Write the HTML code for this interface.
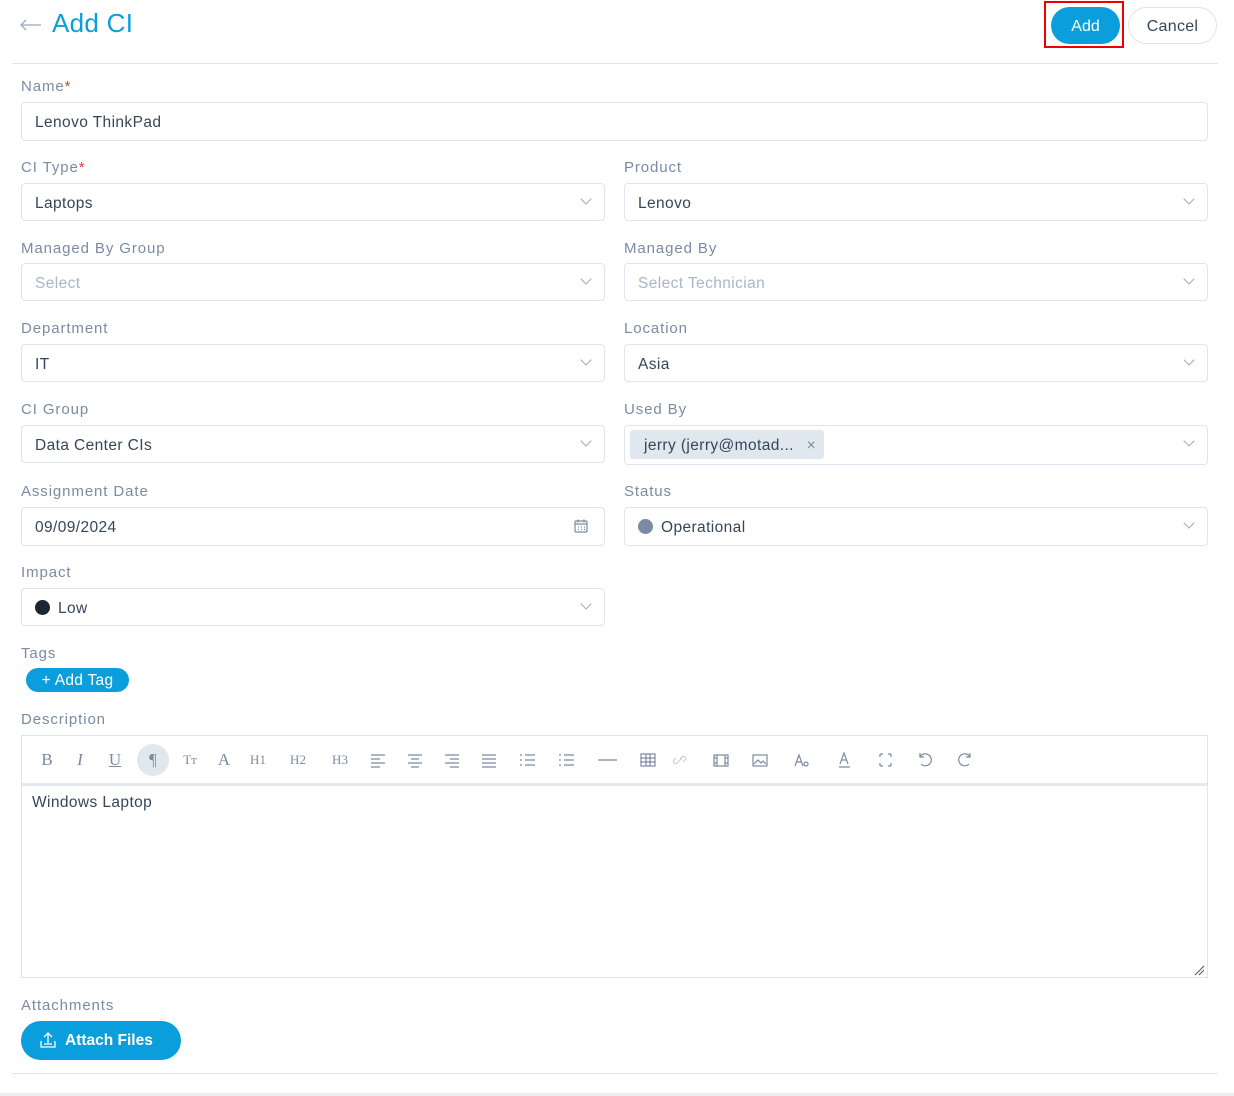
<!DOCTYPE html>
<html><head><meta charset="utf-8"><style>
*{box-sizing:border-box;margin:0;padding:0}
body{width:1234px;height:1096px;background:#fff;font-family:"Liberation Sans",sans-serif;position:relative;overflow:hidden;color:#364658}
.a{position:absolute}
.lbl{position:absolute;font-size:15px;color:#7b8ba3;letter-spacing:0.9px;margin-top:2px}
.req{color:#e53935}
.inp{position:absolute;height:38px;border:1px solid #dfe5ee;border-radius:4px;font-size:15.5px;letter-spacing:0.4px;color:#364658;padding-left:13px;line-height:39px;background:#fff}
.chev{position:absolute;right:14px;top:11px;width:8px;height:8px;border-right:1px solid #9aa8ba;border-bottom:1px solid #9aa8ba;transform:rotate(45deg)}
.tb{position:absolute;top:750px;font-family:"Liberation Serif",serif;color:#7b8ba3;font-size:17px;transform:translateX(-50%);line-height:20px}
</style></head><body>
<svg class="a" style="left:20px;top:19px" width="22" height="12" fill="none" stroke="#9aa8ba" stroke-width="1.3"><path d="M21 6H1M6 1L1 6l5 5"/></svg>
<div class="a" style="left:52px;top:8px;font-size:26px;color:#0a9fdc;letter-spacing:0.3px">Add CI</div>
<div class="a" style="left:1044px;top:1px;width:80px;height:47px;border:2px solid #e00"></div>
<div class="a" style="left:1051px;top:7px;width:69px;height:37px;border-radius:19px;background:#0a9fdc;color:#fff;font-size:16px;text-align:center;line-height:39px">Add</div>
<div class="a" style="left:1128px;top:7px;width:89px;height:37px;border-radius:19px;border:1px solid #dfe5ee;color:#364658;font-size:16px;text-align:center;line-height:37px;letter-spacing:0.3px">Cancel</div>
<div class="a" style="left:12px;top:63px;width:1206px;height:1px;background:#dfe5ee"></div>

<div class="lbl" style="left:21px;top:76px">Name<span class="req">*</span></div>
<div class="inp" style="left:21px;top:102px;width:1187px;height:39px">Lenovo ThinkPad</div>

<div class="lbl" style="left:21px;top:157px">CI Type<span class="req">*</span></div>
<div class="inp" style="left:21px;top:183px;width:584px">Laptops<i class="chev"></i></div>
<div class="lbl" style="left:624px;top:157px">Product</div>
<div class="inp" style="left:624px;top:183px;width:584px">Lenovo<i class="chev"></i></div>

<div class="lbl" style="left:21px;top:238px">Managed By Group</div>
<div class="inp" style="left:21px;top:263px;width:584px;color:#aab6c7">Select<i class="chev"></i></div>
<div class="lbl" style="left:624px;top:238px">Managed By</div>
<div class="inp" style="left:624px;top:263px;width:584px;color:#aab6c7">Select Technician<i class="chev"></i></div>

<div class="lbl" style="left:21px;top:318px">Department</div>
<div class="inp" style="left:21px;top:344px;width:584px">IT<i class="chev"></i></div>
<div class="lbl" style="left:624px;top:318px">Location</div>
<div class="inp" style="left:624px;top:344px;width:584px">Asia<i class="chev"></i></div>

<div class="lbl" style="left:21px;top:399px">CI Group</div>
<div class="inp" style="left:21px;top:425px;width:584px">Data Center CIs<i class="chev"></i></div>
<div class="lbl" style="left:624px;top:399px">Used By</div>
<div class="inp" style="left:624px;top:425px;width:584px;height:40px;padding-left:5px;line-height:29px">
<span style="display:inline-block;background:#e1e7ef;border-radius:3px;height:29px;line-height:31px;margin-top:4px;padding:0 8px 0 14px;vertical-align:top">jerry (jerry@motad... <span style="color:#7b8ba3;margin-left:8px">&#215;</span></span><i class="chev"></i></div>

<div class="lbl" style="left:21px;top:481px">Assignment Date</div>
<div class="inp" style="left:21px;top:507px;width:584px;height:39px">09/09/2024
<svg class="a" style="right:16px;top:11px" width="14" height="14" viewBox="0 0 14 14" fill="none" stroke="#7b8ba3" stroke-width="1.2"><rect x="1" y="2" width="12" height="11" rx="1"/><path d="M1 5h12M4 0.5v3M10 0.5v3"/><path d="M4 8h1M7 8h1M10 8h1M4 10.5h1M7 10.5h1M10 10.5h1"/></svg></div>
<div class="lbl" style="left:624px;top:481px">Status</div>
<div class="inp" style="left:624px;top:507px;width:584px;height:39px"><span style="display:inline-block;width:15px;height:15px;border-radius:50%;background:#7b8ba3;vertical-align:-2px;margin-right:8px"></span>Operational<i class="chev"></i></div>

<div class="lbl" style="left:21px;top:562px">Impact</div>
<div class="inp" style="left:21px;top:588px;width:584px"><span style="display:inline-block;width:15px;height:15px;border-radius:50%;background:#1b2533;vertical-align:-2px;margin-right:8px"></span>Low<i class="chev"></i></div>

<div class="lbl" style="left:21px;top:643px">Tags</div>
<div class="a" style="left:26px;top:668px;width:103px;height:24px;border-radius:12px;background:#0a9fdc;color:#fff;font-size:15.5px;line-height:25px;text-align:center;letter-spacing:0.3px">+ Add Tag</div>

<div class="lbl" style="left:21px;top:709px">Description</div>
<div class="a" style="left:21px;top:735px;width:1187px;height:243px;border:1px solid #dfe5ee"></div>
<div class="a" style="left:22px;top:783px;width:1185px;height:3px;background:#e6e9ee"></div>
<div class="a" style="left:137px;top:744px;width:32px;height:32px;border-radius:50%;background:#e1e7ef"></div>
<div class="tb" style="left:47px">B</div>
<div class="tb" style="left:80px;font-style:italic">I</div>
<div class="tb" style="left:115px;text-decoration:underline">U</div>
<div class="tb" style="left:153px">¶</div>
<div class="tb" style="left:190px;font-size:13px">Tт</div>
<div class="tb" style="left:224px">A</div>
<div class="tb" style="left:258px;font-size:13px">H1</div>
<div class="tb" style="left:298px;font-size:13px">H2</div>
<div class="tb" style="left:340px;font-size:13px">H3</div>
<svg class="a" style="left:370px;top:752px" width="610" height="18" fill="none" stroke="#7b8ba3" stroke-width="1.2">
<path d="M1 3h14M1 7h9M1 11h14M1 15h9"/>
<path d="M38 3h14M41 7h8M38 11h14M41 15h8"/>
<path d="M75 3h14M80 7h9M75 11h14M80 15h9"/>
<path d="M112 3h14M112 7h14M112 11h14M112 15h14"/>
<path d="M150 3h2M155 3h10M150 8h2M155 8h10M150 13h2M155 13h10"/>
<path d="M189 3h2M194 3h10M189 8h2M194 8h10M189 13h2M194 13h10"/>
<path d="M228 8h19"/>
<rect x="271" y="2" width="14" height="12"/><path d="M271 6h14M271 10h14M276 2v12M280 2v12"/>
<path d="M306 12l6-6M309 9l-2 2a2 2 0 0 1-3-3l2-2M310 7l2-2a2 2 0 0 1 3 3l-2 2" stroke="#c5ced9"/>
<rect x="344" y="3" width="14" height="11"/><path d="M347 3v11M355 3v11M344 6h3M344 11h3M355 6h3M355 11h3"/>
<rect x="383" y="3" width="14" height="11"/><path d="M384 12l4-4 3 3 2-2 3 3"/>
<path d="M425 14l4-11 4 11M426 10h6"/><circle cx="436" cy="12" r="2"/>
<path d="M470 12l4-11 4 11M471 8h6M469 15h11"/>
<path d="M510 2h3M510 2v3M521 2h-3M521 2v3M510 14h3M510 14v-3M521 14h-3M521 14v-3"/>
<path d="M550 5a6 6 0 1 1 1 7M550 1v4h4"/>
<path d="M600 5a6 6 0 1 0 -1 7M600 1v4h-4"/>
</svg>
<div class="a" style="left:32px;top:794px;font-size:15.5px;color:#364658;letter-spacing:0.4px">Windows Laptop</div>
<svg class="a" style="left:1193px;top:964px" width="12" height="12" stroke="#555" stroke-width="1"><path d="M2 11L11 2M6 11L11 6"/></svg>

<div class="lbl" style="left:21px;top:995px">Attachments</div>
<div class="a" style="left:21px;top:1021px;width:160px;height:39px;border-radius:20px;background:#0a9fdc;color:#fff;font-size:15.5px;font-weight:bold;line-height:40px;padding-left:44px">Attach Files</div>
<svg class="a" style="left:39px;top:1031px" width="18" height="18" fill="none" stroke="#fff" stroke-width="1.3"><path d="M9 12V2M5 6l4-4 4 4M2 10v6h14v-6M5 13h8"/></svg>
<div class="a" style="left:12px;top:1073px;width:1206px;height:1px;background:#dfe5ee"></div>
<div class="a" style="left:0;top:1093px;width:1234px;height:3px;background:#eceef1"></div>
</body></html>
